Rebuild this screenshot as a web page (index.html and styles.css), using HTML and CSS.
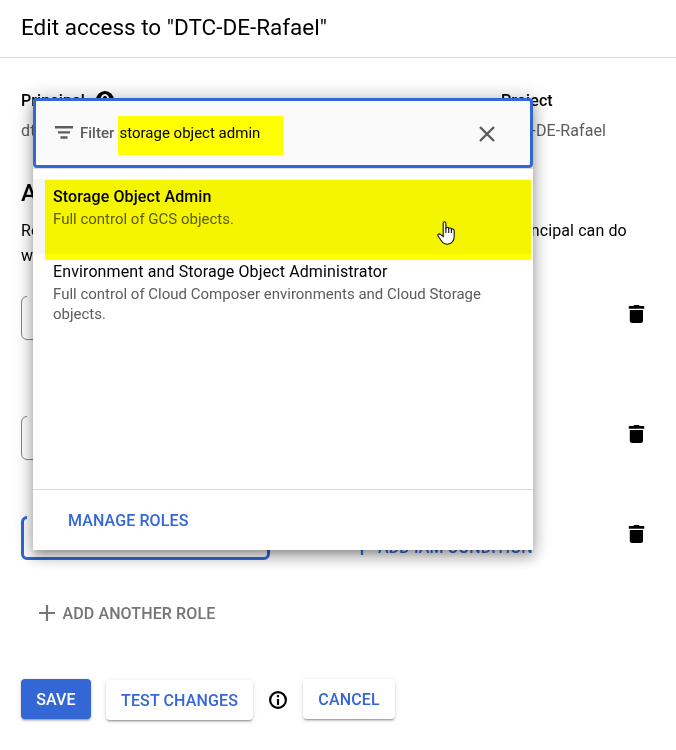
FILE: index.html
```html
<!DOCTYPE html>
<html lang="en">
<head>
<meta charset="utf-8">
<title>Edit access</title>
<link rel="stylesheet" href="styles.css">
</head>
<body>
<svg class="defs" width="0" height="0">
  <symbol id="trash" viewBox="0 0 16 18"><path d="M5 1Q5 0 6 0h4q1 0 1 1h4q1 0 1 1v1.700H0V2q0-1 1-1z"/><path d="M1.300 5h13.200v10.500q0 2.500-2.500 2.500H3.800q-2.500 0-2.500-2.500z"/></symbol>
  <symbol id="plus" viewBox="0 0 16 16"><path d="M6.900 0h2.200v6.900H16v2.200H9.100V16H6.900V9.100H0V6.900h6.900z"/></symbol>
</svg>
<div class="panel">
  <header class="header"><h1 class="title">Edit access to "DTC-DE-Rafael"</h1></header>
  <main class="content">
    <div class="details">
      <section class="principal">
        <div class="label">Principal
          <svg class="help" viewBox="0 0 18 18"><circle cx="9" cy="9" r="9"/><path d="M6 7a3 3 0 1 1 4.600 2.500Q9 10.400 9 11.700M9 13v2" fill="none" stroke="#fff" stroke-width="2"/></svg>
        </div>
        <div class="value">dtc-de-user</div>
      </section>
      <section>
        <div class="label">Project</div>
        <div class="value">DTC-DE-Rafael</div>
      </section>
    </div>
    <h2 class="subtitle">Assign roles</h2>
    <p class="intro"><span class="line">Roles are composed of sets of permissions and determine what the principal can do</span><span>with this resource.</span></p>
    <div class="role role-tall"><div class="field"></div><svg class="trash"><use href="#trash"/></svg></div>
    <div class="role"><div class="field"></div><svg class="trash"><use href="#trash"/></svg></div>
    <div class="role"><div class="field field-active"></div><div class="condition"><svg class="plus"><use href="#plus"/></svg><span>ADD IAM CONDITION</span></div><svg class="trash"><use href="#trash"/></svg></div>
    <div class="add"><svg class="plus"><use href="#plus"/></svg><span class="add-text">ADD ANOTHER ROLE</span></div>
    <div class="actions">
      <button class="btn save"><span>SAVE</span></button>
      <button class="btn test"><span>TEST CHANGES</span></button>
      <svg class="info" viewBox="0 0 18 18"><circle cx="9" cy="9" r="7.900" fill="none" stroke="#000" stroke-width="2.200"/><path d="M7.900 4h2.200v2.200H7.900zM7.900 8h2.200v6H7.900z"/></svg>
      <button class="btn cancel"><span>CANCEL</span></button>
    </div>
  </main>
  <div class="popup">
    <div class="filter">
      <svg class="filter-icon" viewBox="0 0 18 13"><path d="M0 0h18v2.400H0zM3 5.200h12v2.400H3zM5.500 10.300h7v2.400h-7z"/></svg>
      <span class="filter-label">Filter</span>
      <span class="query"><span>storage object admin</span></span>
      <svg class="close" viewBox="0 0 16 16"><path d="M1 1l14 14M15 1L1 15"/></svg>
    </div>
    <div class="list">
      <div class="option option-hover">
        <div class="name name-strong"><span>Storage Object Admin</span></div>
        <div class="desc"><span>Full control of GCS objects.</span></div>
        <div class="marker"></div>
        <svg class="cursor" viewBox="0 0 18 24"><path d="M6.200 14V2.300Q6.200.8 7.500.8T8.900 2.300V7Q9.500 6 10.500 6.300 11.700 6.500 11.700 7.500 12.300 6.800 13.300 7q1 .2 1.100 1.200Q15 7.600 16 8q1.200.4 1.200 1.700v5.600q0 3.500-1.800 5.500-1.600 2.400-4.900 2.400-4 0-6-3.200L1.200 15.300Q.3 14 1.300 13.200t2.500.4L6.200 15.600z"/><path d="M8.900 7V12M11.700 7.500V12M14.400 8.200V12" fill="none"/></svg>
      </div>
      <div class="option">
        <div class="name"><span>Environment and Storage Object Administrator</span></div>
        <div class="desc">Full control of Cloud Composer environments and Cloud Storage objects.</div>
      </div>
    </div>
    <div class="footer"><span>MANAGE ROLES</span></div>
  </div>
</div>
</body>
</html>
```
FILE: styles.css
```css
* { box-sizing: border-box; }
body { margin: 0; background: #fff; color: #000; font-family: Roboto, "Liberation Sans", sans-serif; font-size: 16px; letter-spacing: .11px; }
.defs { display: block; position: absolute; }
.panel { position: relative; width: 676px; height: 750px; overflow: hidden; }
.header { height: 58px; padding: 12px 21px 0; border-bottom: 1px solid #dadada; }
.title { margin: 0; font-size: 22.5px; font-weight: 400; letter-spacing: 0; line-height: 31px; white-space: nowrap; }
.content { padding: 0 21px; }
.details { display: flex; padding-top: 33px; height: 119px; }
.principal { width: 480px; }
.label { display: flex; gap: 11px; font-weight: 500; line-height: 20px; height: 30px; }
.help { width: 18px; height: 18px; }
.value { line-height: 20px; color: #5c5c5c; }
.subtitle { margin: 0; font-size: 24px; font-weight: 500; line-height: 32px; height: 41px; }
.intro { margin: 0; line-height: 25px; height: 78px; }
.intro span { display: block; white-space: nowrap; }
.role { display: flex; height: 100px; }
.role-tall { height: 120px; }
.field { position: relative; width: 249px; height: 44px; border: 1px solid #80868b; border-radius: 6px; }
.field::before { content: ""; position: absolute; left: 5px; top: -1px; width: 90px; height: 1px; background: #fff; }
.field-active { border: 3px solid #3367d6; }
.field-active::before { left: 3px; top: -3px; height: 3px; }
.trash { width: 16px; height: 18px; margin: 9px 0 0 auto; transform: translateX(-10.5px); }
.condition { display: flex; align-items: center; gap: 8px; height: 20px; margin: 21px 0 0 84px; color: #3367d6; fill: #3367d6; font-weight: 500; white-space: nowrap; }
.plus { width: 16px; height: 16px; }
.add { display: flex; align-items: center; gap: 7.500px; height: 20px; margin: -13px 0 0 18px; color: #757575; fill: #757575; font-weight: 500; }
.actions { display: flex; margin-top: 56px; }
.btn { height: 40px; padding: 0; border: 0; border-radius: 4px; background: #fff; color: #3367d6; font: 500 16px Roboto, sans-serif; letter-spacing: .13px; box-shadow: 0 1px 5px rgba(0,0,0,.12), 0 2px 2px rgba(0,0,0,.14), 0 2px 1px -1px rgba(0,0,0,.2); }
.save { width: 70px; background: #3367d6; color: #fff; }
.test { width: 147px; margin: 1px 0 0 15px; }
.info { width: 18px; height: 18px; margin: 12px 16px 0; }
.cancel { width: 92px; }
.popup { position: absolute; left: 33px; top: 98px; width: 500px; height: 452px; display: flex; flex-direction: column; background: #fff; border-radius: 4px 4px 0 0; box-shadow: 0 5px 6px -3px rgba(0,0,0,.2), 0 9px 12px 1px rgba(0,0,0,.14), 0 3px 16px 2px rgba(0,0,0,.12), 0 0 20px 2px rgba(0,0,0,.14); }
.filter { display: flex; flex: none; height: 70px; padding: 15px 35px 0 19px; border: 3px solid #3367d6; border-radius: 4px; background: #fafafa; color: #5c5c5c; fill: #5c5c5c; }
.filter-icon { width: 18px; height: 13px; margin: 10px 7px 0 0; }
.filter-label { width: 38px; line-height: 34px; font-size: 15px; font-weight: 500; letter-spacing: 0; }
.query { width: 165px; height: 39px; padding-left: 1.500px; line-height: 34px; font-size: 15px; letter-spacing: 0; color: #000; background: #ff0; white-space: nowrap; }
.close { width: 16px; height: 16px; margin: 10px 0 0 auto; fill: none; stroke: #5c5c5c; stroke-width: 2.400; }
.list { height: 321px; flex: none; padding-top: 10px; border-top: 1px solid #dadada; }
.option { position: relative; height: 75px; padding: 8px 20px 0; }
.option-hover { background: #f5f5f5; }
.name { height: 22px; line-height: 20px; }
.name-strong { font-weight: 500; }
.desc { line-height: 20px; font-size: 15px; letter-spacing: 0; color: #5c5c5c; }
.marker { position: absolute; left: 12px; top: 1px; width: 486px; height: 80px; background: #ff0; mix-blend-mode: multiply; }
.cursor { position: absolute; left: 404px; top: 42px; width: 18px; height: 24px; fill: #fff; stroke: #111; stroke-width: 1.100; z-index: 1; }
.footer { flex: 1; padding: 21px 35px; border-top: 1px solid #dadada; line-height: 20px; font-weight: 500; color: #3367d6; }
```
